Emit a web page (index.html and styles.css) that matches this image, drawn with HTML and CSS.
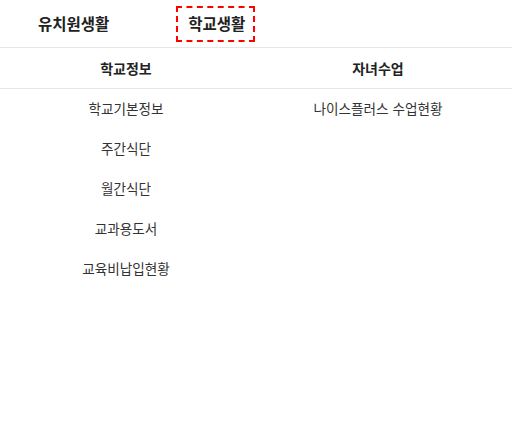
FILE: index.html
```html
<!DOCTYPE html>
<html lang="ko">
<head>
<meta charset="utf-8">
<link rel="stylesheet" href="styles.css">
</head>
<body>
<nav class="tabs">
  <a class="tab">유치원생활</a>
  <a class="tab active">학교생활</a>
</nav>
<div class="menu">
  <div class="col">
    <div class="head">학교정보</div>
    <ul class="list">
      <li>학교기본정보</li>
      <li>주간식단</li>
      <li>월간식단</li>
      <li>교과용도서</li>
      <li>교육비납입현황</li>
    </ul>
  </div>
  <div class="col">
    <div class="head">자녀수업</div>
    <ul class="list">
      <li>나이스플러스 수업현황</li>
    </ul>
  </div>
</div>
</body>
</html>
```
FILE: styles.css
```css
html, body {
  margin: 0;
  padding: 0;
  background: #fff;
}
body {
  font-family: "Noto Sans CJK KR", "Noto Sans", sans-serif;
  color: #222;
}
.tabs {
  display: flex;
  align-items: center;
  height: 47px;
  padding-left: 28px;
  border-bottom: 1px solid #e6e6e6;
}
.tab {
  display: block;
  font-size: 15.5px;
  font-weight: 700;
  line-height: 21px;
  padding: 5px 10px 6px;
  color: #222;
  margin-right: 59px;
}
.tab.active {
  padding-right: 8px;
  outline: 2px dashed #f00;
}
.menu {
  display: grid;
  grid-template-columns: 1fr 1fr;
  padding-right: 8px;
}
.head {
  height: 40px;
  line-height: 40px;
  text-align: center;
  font-size: 14px;
  font-weight: 700;
  color: #222;
  border-bottom: 1px solid #e6e6e6;
}
.menu .col:last-child .head {
  margin-right: -8px;
  padding-right: 8px;
}
.list {
  list-style: none;
  margin: 0;
  padding: 0;
}
.list li {
  height: 40px;
  line-height: 38px;
  text-align: center;
  font-size: 13.6px;
  color: #333;
}
```
